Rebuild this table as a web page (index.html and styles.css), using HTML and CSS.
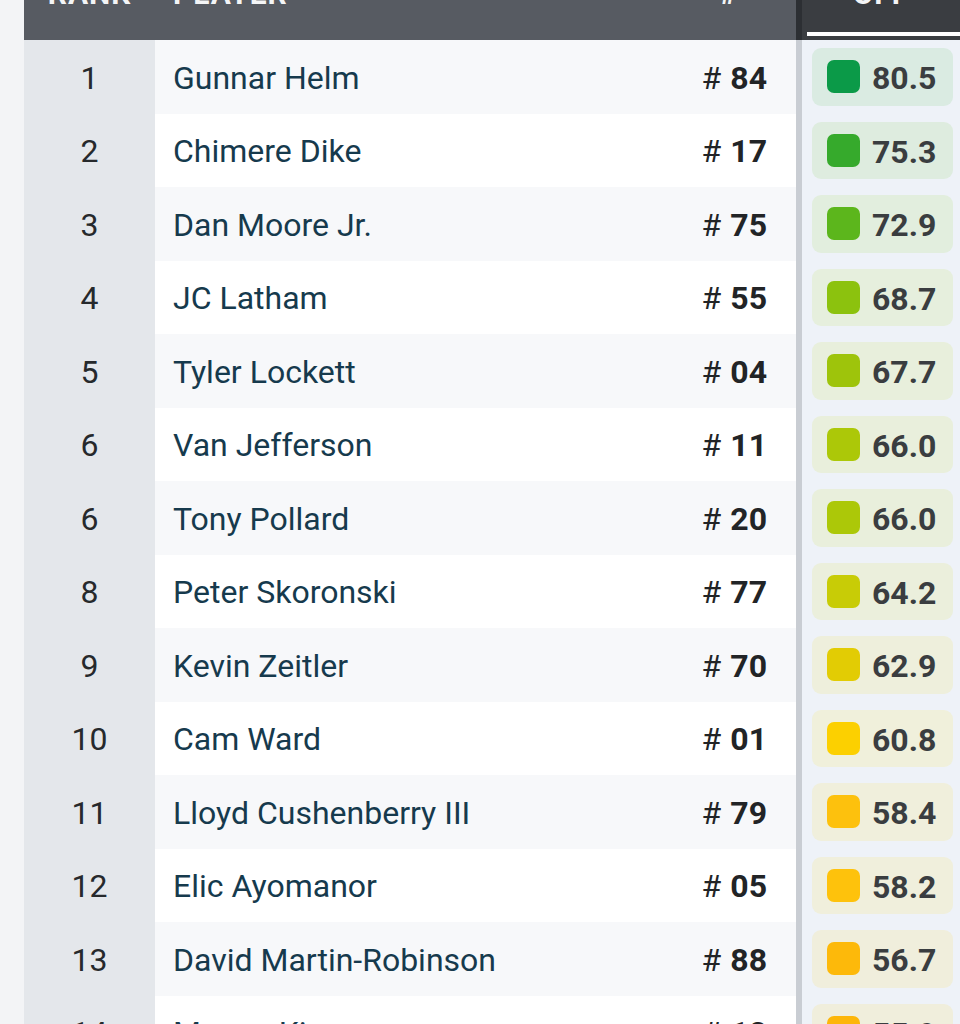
FILE: index.html
```html
<!DOCTYPE html>
<html lang="en">
<head>
<meta charset="utf-8">
<title>Player Grades</title>
<link rel="stylesheet" href="styles.css">
</head>
<body>
<div class="table">
  <div class="row head">
    <div class="c rank">RANK</div>
    <div class="c player">PLAYER</div>
    <div class="c num">#</div>
    <div class="c grade">OFF</div>
  </div>
  <div class="row"><div class="c rank">1</div><div class="c player">Gunnar Helm</div><div class="c num"><span class="h">#</span><b>84</b></div><div class="c grade"><div class="pill" style="--c:#0b9a48"><span class="sq"></span><span class="v">80.5</span></div></div></div>
  <div class="row"><div class="c rank">2</div><div class="c player">Chimere Dike</div><div class="c num"><span class="h">#</span><b>17</b></div><div class="c grade"><div class="pill" style="--c:#36aa2c"><span class="sq"></span><span class="v">75.3</span></div></div></div>
  <div class="row"><div class="c rank">3</div><div class="c player">Dan Moore Jr.</div><div class="c num"><span class="h">#</span><b>75</b></div><div class="c grade"><div class="pill" style="--c:#5cb61c"><span class="sq"></span><span class="v">72.9</span></div></div></div>
  <div class="row"><div class="c rank">4</div><div class="c player">JC Latham</div><div class="c num"><span class="h">#</span><b>55</b></div><div class="c grade"><div class="pill" style="--c:#8cc20e"><span class="sq"></span><span class="v">68.7</span></div></div></div>
  <div class="row"><div class="c rank">5</div><div class="c player">Tyler Lockett</div><div class="c num"><span class="h">#</span><b>04</b></div><div class="c grade"><div class="pill" style="--c:#9ec40b"><span class="sq"></span><span class="v">67.7</span></div></div></div>
  <div class="row"><div class="c rank">6</div><div class="c player">Van Jefferson</div><div class="c num"><span class="h">#</span><b>11</b></div><div class="c grade"><div class="pill" style="--c:#acc808"><span class="sq"></span><span class="v">66.0</span></div></div></div>
  <div class="row"><div class="c rank">6</div><div class="c player">Tony Pollard</div><div class="c num"><span class="h">#</span><b>20</b></div><div class="c grade"><div class="pill" style="--c:#acc808"><span class="sq"></span><span class="v">66.0</span></div></div></div>
  <div class="row"><div class="c rank">8</div><div class="c player">Peter Skoronski</div><div class="c num"><span class="h">#</span><b>77</b></div><div class="c grade"><div class="pill" style="--c:#c8cc06"><span class="sq"></span><span class="v">64.2</span></div></div></div>
  <div class="row"><div class="c rank">9</div><div class="c player">Kevin Zeitler</div><div class="c num"><span class="h">#</span><b>70</b></div><div class="c grade"><div class="pill" style="--c:#e2cc04"><span class="sq"></span><span class="v">62.9</span></div></div></div>
  <div class="row"><div class="c rank">10</div><div class="c player">Cam Ward</div><div class="c num"><span class="h">#</span><b>01</b></div><div class="c grade"><div class="pill" style="--c:#fcd000"><span class="sq"></span><span class="v">60.8</span></div></div></div>
  <div class="row"><div class="c rank">11</div><div class="c player">Lloyd Cushenberry III</div><div class="c num"><span class="h">#</span><b>79</b></div><div class="c grade"><div class="pill" style="--c:#fdc10d"><span class="sq"></span><span class="v">58.4</span></div></div></div>
  <div class="row"><div class="c rank">12</div><div class="c player">Elic Ayomanor</div><div class="c num"><span class="h">#</span><b>05</b></div><div class="c grade"><div class="pill" style="--c:#fec20c"><span class="sq"></span><span class="v">58.2</span></div></div></div>
  <div class="row"><div class="c rank">13</div><div class="c player">David Martin-Robinson</div><div class="c num"><span class="h">#</span><b>88</b></div><div class="c grade"><div class="pill" style="--c:#fdb90a"><span class="sq"></span><span class="v">56.7</span></div></div></div>
  <div class="row"><div class="c rank">14</div><div class="c player">Mason Kinsey</div><div class="c num"><span class="h">#</span><b>12</b></div><div class="c grade"><div class="pill" style="--c:#fdb60a"><span class="sq"></span><span class="v">55.9</span></div></div></div>
</div>
</body>
</html>
```

FILE: styles.css
```css
html, body {
  margin: 0;
  padding: 0;
}
body {
  background: #f3f4f6;
  font-family: Roboto, "Liberation Sans", sans-serif;
  width: 960px;
  height: 1024px;
  overflow: hidden;
}
.table {
  margin-top: -30px;
  margin-left: 24px;
}
.row {
  display: grid;
  grid-template-columns: 131px 1fr 116px 164px;
  height: 73.5px;
  background: #f7f8fa;
}
.row:nth-child(odd) {
  background: #ffffff;
}
.c {
  display: flex;
  align-items: center;
  font-size: 32px;
  padding-top: 2px;
  box-sizing: border-box;
}
.rank {
  background: #e4e7eb;
  justify-content: center;
  color: #26292c;
}
.player {
  padding-left: 18px;
  color: #163a4d;
}
.num {
  justify-content: flex-end;
  padding-right: 29px;
  color: #222426;
}
.num .h {
  font-weight: 400;
  margin-right: 9px;
}
.num b {
  font-weight: 700;
}
.grade {
  background: #eef2f8;
  border-left: 6px solid #c9cdd3;
  padding: 8px 7px 8px 10px;
}
.pill {
  flex: 1;
  height: 100%;
  border-radius: 9px;
  background: color-mix(in srgb, var(--c) 9%, #eff3f1);
  display: flex;
  align-items: center;
  padding-left: 15px;
  gap: 12px;
}
.sq {
  width: 33px;
  height: 33px;
  border-radius: 7px;
  background: var(--c);
  flex: none;
}
.v {
  font-weight: 700;
  color: #3a3d40;
  font-size: 32px;
  padding-top: 3px;
}

/* header */
.row.head {
  height: 70px;
  background: #575b62;
}
.head .c {
  align-items: flex-start;
  padding-top: 9px;
  font-size: 30px;
  line-height: 30px;
  font-weight: 700;
  letter-spacing: 1px;
  color: #f4f5f6;
}
.head .rank {
  background: #575b62;
}
.head .num {
  padding-right: 58px;
}
.head .grade {
  justify-content: center;
  border-left-color: #2c2f33;
  background:
    linear-gradient(#ffffff, #ffffff) no-repeat 5px 62px / calc(100% - 5px) 4px,
    #3a3d41;
  padding-left: 0;
  padding-right: 0;
  padding-bottom: 0;
}
```
